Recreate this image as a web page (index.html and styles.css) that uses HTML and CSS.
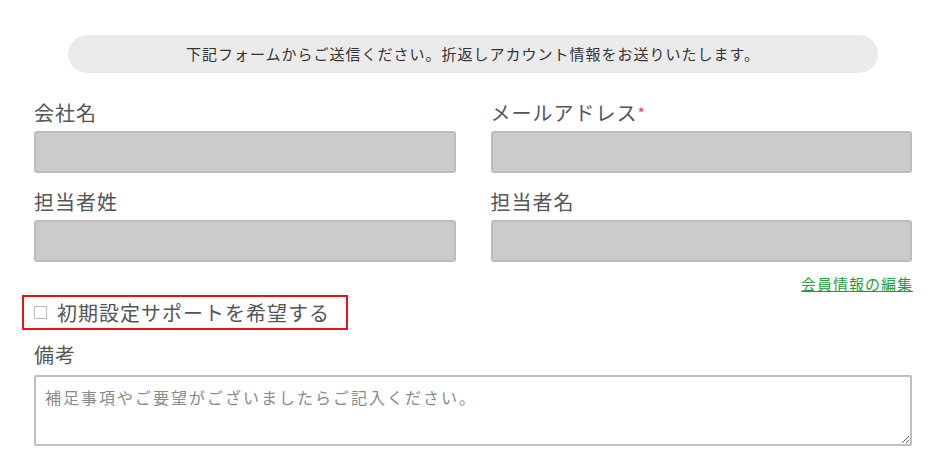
FILE: index.html
```html
<!DOCTYPE html>
<html lang="ja">
<head>
<meta charset="utf-8">
<link rel="stylesheet" href="styles.css">
</head>
<body>
<div class="page">
  <p class="notice">下記フォームからご送信ください。折返しアカウント情報をお送りいたします。</p>
  <div class="grid">
    <div class="field">
      <label class="label">会社名</label>
      <input class="input" type="text">
    </div>
    <div class="field">
      <label class="label">メールアドレス<span class="req">*</span></label>
      <input class="input" type="text">
    </div>
    <div class="field">
      <label class="label">担当者姓</label>
      <input class="input" type="text">
    </div>
    <div class="field">
      <label class="label">担当者名</label>
      <input class="input" type="text">
    </div>
  </div>
  <div class="link-row"><a class="edit-link" href="#">会員情報の編集</a></div>
  <label class="support"><span class="box"></span>初期設定サポートを希望する</label>
  <div class="field notes">
    <label class="label">備考</label>
    <textarea class="textarea" placeholder="補足事項やご要望がございましたらご記入ください。"></textarea>
  </div>
</div>
</body>
</html>
```
FILE: styles.css
```css
* { box-sizing: border-box; }
html, body { margin: 0; padding: 0; background: #fff; }
body {
  font-family: "Noto Sans CJK JP", "Noto Sans", sans-serif;
  color: #555;
}
.page {
  padding: 35px 34px 0;
}
.notice {
  margin: 0 34px;
  height: 38px;
  border-radius: 19px;
  background: #ebebeb;
  color: #333;
  font-size: 15px;
  letter-spacing: 1px;
  line-height: 38px;
  text-align: center;
}
.grid {
  display: grid;
  grid-template-columns: 1fr 1fr;
  column-gap: 35px;
  row-gap: 15px;
  margin-top: 26px;
}
.field {
  display: flex;
  flex-direction: column;
}
.label {
  font-size: 20px;
  letter-spacing: 1px;
  line-height: 28px;
  margin-bottom: 4px;
  color: #555;
}
.req {
  color: #f0476a;
  font-size: 16px;
  vertical-align: top;
  margin-left: 0;
}
.input {
  height: 42px;
  border: 2px solid #bdbdbd;
  border-radius: 3px;
  background: #cbcbcb;
  width: 100%;
}
.link-row {
  display: flex;
  justify-content: flex-end;
  margin-top: 11px;
}
.edit-link {
  font-size: 15px;
  letter-spacing: 1px;
  margin-right: -1px;
  line-height: 22px;
  color: #1f9e3a;
  text-decoration: underline;
}
.support {
  display: inline-flex;
  align-items: center;
  margin-left: -12px;
  margin-top: 0;
  height: 35px;
  padding: 0 10px 0 10px;
  border: 2px solid #ee1111;
  font-size: 20px;
  letter-spacing: 1px;
  color: #555;
  width: 326px;
}
.box {
  display: inline-block;
  width: 13px;
  height: 13px;
  border: 1px solid #bbb;
  margin-right: 10px;
  background: #fff;
}
.notes {
  margin-top: 11px;
}
.label + .textarea { margin-top: 2px; }
.textarea {
  height: 71px;
  width: 100%;
  border: 2px solid #c0c0c0;
  border-radius: 2px;
  padding: 8px 9px;
  font-family: "Noto Sans CJK JP", "Noto Sans", sans-serif;
  font-size: 16px;
  letter-spacing: 2px;
  line-height: 24px;
  color: #555;
  resize: both;
}
.textarea::placeholder { color: #8a8a8a; }
```
